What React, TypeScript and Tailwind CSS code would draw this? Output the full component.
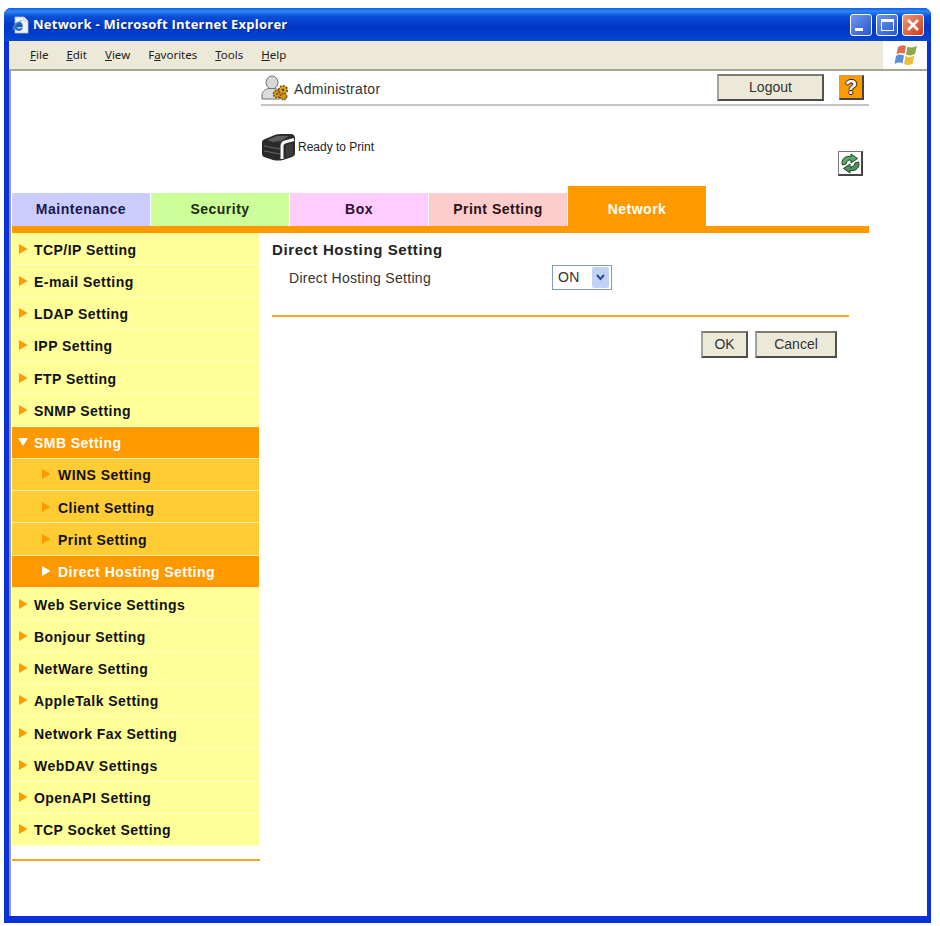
import React from 'react';

const ARIAL = "font-['Liberation_Sans',Arial,sans-serif]";

const NAV_ITEMS = [
  { label: 'TCP/IP Setting' },
  { label: 'E-mail Setting' },
  { label: 'LDAP Setting' },
  { label: 'IPP Setting' },
  { label: 'FTP Setting' },
  { label: 'SNMP Setting' },
  { label: 'SMB Setting', open: true },
  { label: 'WINS Setting', sub: true },
  { label: 'Client Setting', sub: true },
  { label: 'Print Setting', sub: true },
  { label: 'Direct Hosting Setting', sub: true, active: true },
  { label: 'Web Service Settings' },
  { label: 'Bonjour Setting' },
  { label: 'NetWare Setting' },
  { label: 'AppleTalk Setting' },
  { label: 'Network Fax Setting' },
  { label: 'WebDAV Settings' },
  { label: 'OpenAPI Setting' },
  { label: 'TCP Socket Setting' },
];

const TABS = [
  { label: 'Maintenance', cls: 'bg-[#ccccff] text-[#1a1a4a]' },
  { label: 'Security', cls: 'bg-[#ccff99] text-[#1c2a10]' },
  { label: 'Box', cls: 'bg-[#ffccff] text-[#2a1030]' },
  { label: 'Print Setting', cls: 'bg-[#ffcccc] text-[#2a1414]' },
];

const MENU = [
  { key: 'F', rest: 'ile', before: '' },
  { key: 'E', rest: 'dit', before: '' },
  { key: 'V', rest: 'iew', before: '' },
  { key: 'a', rest: 'vorites', before: 'F' },
  { key: 'T', rest: 'ools', before: '' },
  { key: 'H', rest: 'elp', before: '' },
];

const Arrow: React.FC<{ color: string; down?: boolean }> = ({ color, down }) => (
  <svg width="10" height="10" viewBox="0 0 10 10" className="shrink-0">
    <path d={down ? 'M0 1H10L5 9Z' : 'M1 0L9.5 5L1 10Z'} fill={color} />
  </svg>
);

const WinButton: React.FC<{ children: React.ReactNode; cls: string }> = ({ children, cls }) => (
  <div className={`size-[22px] rounded-[3px] border border-white flex items-center justify-center ${cls}`}>
    {children}
  </div>
);

const IeIcon = () => (
  <svg width="18" height="18" viewBox="0 0 18 18" className="shrink-0">
    <path d="M4 1H13L17 5V17H4Z" fill="#f2f2f2" stroke="#b8c0cc" strokeWidth="0.8" />
    <path d="M13 1V5H17" fill="#ffffff" stroke="#b8c0cc" strokeWidth="0.8" />
    <path
      d="M1 10.5H11C11 8 9.5 6.8 7.8 6.8C6 6.8 4.6 8 4.2 9.5H6C6.3 8.8 7 8.4 7.8 8.4C8.6 8.4 9.2 9 9.2 9.6H3.5"
      fill="#2a78d8"
      stroke="#1c5fb8"
      strokeWidth="1.4"
    />
    <path d="M3.5 10.5C3.5 13 5.5 14.5 7.8 14.5C9.5 14.5 10.7 13.7 11.3 12.4H9.3C8.9 12.9 8.4 13 7.8 13C6.6 13 5.8 12 5.7 10.5Z" fill="#2a78d8" stroke="#1c5fb8" strokeWidth="0.8" />
    <path d="M2 14C3 9 7 5.5 11 4.5" fill="none" stroke="#5aa0e8" strokeWidth="1" />
  </svg>
);

const XpFlag = () => (
  <svg width="24" height="22" viewBox="0 0 24 22">
    <path d="M4 3Q8 0 12 2L10.5 10Q7 8 2.5 10.5Z" fill="#d9714f" />
    <path d="M13.5 2.5Q18 5 23 1.5L21 10Q16.5 12.5 12 10.5Z" fill="#8fa84a" />
    <path d="M2 12Q6 9.5 10 11.5L8.5 19.5Q5 17.5 0.5 20Z" fill="#5b8ed8" />
    <path d="M11.5 12Q16 14 20.5 11.5L18.5 20Q14 22 10 20Z" fill="#eebc3e" />
  </svg>
);

const AdminIcon = () => (
  <svg width="28" height="26" viewBox="0 0 28 26" className="shrink-0">
    <ellipse cx="11" cy="7.5" rx="6" ry="6.5" fill="#d8d8d8" stroke="#707070" />
    <path d="M1 24V20C1 16 5 14 8 13.5H14C17 14 19 16 19 24Z" fill="#dcdcdc" stroke="#707070" />
    <circle cx="16" cy="19" r="3.6" fill="#dd9a18" stroke="#7a5208" strokeWidth="1.6" strokeDasharray="1.8 1" />
    <circle cx="22" cy="15" r="4.2" fill="#e5a520" stroke="#7a5208" strokeWidth="1.8" strokeDasharray="2 1.2" />
    <circle cx="22.5" cy="21.5" r="3.2" fill="#d9951a" stroke="#7a5208" strokeWidth="1.5" strokeDasharray="1.6 1" />
    <circle cx="22" cy="15" r="1.4" fill="#6a4808" />
    <circle cx="16" cy="19" r="1.1" fill="#6a4808" />
  </svg>
);

const PrinterIcon = () => (
  <svg width="35" height="28" viewBox="0 0 35 28" className="shrink-0">
    <path d="M1 9Q1 7 4 6L15 1.5Q17 1 20 1H31Q34 2 34 5V21Q34 23 31 24L22 27Q17 28 12 27L3 24Q1 23 1 21Z" fill="#2a2a2a" />
    <path d="M6 7L16 3H28L20 8L12 9Z" fill="#5e5e5e" />
    <path d="M3 13L19 16M3 18L19 21" stroke="#666" strokeWidth="1.2" />
    <path d="M21 26V13Q21 10 24 9L33 6.5" fill="none" stroke="#f6f6f6" strokeWidth="3" />
    <path d="M25 12L32 10V22L25 24Z" fill="#3c3c3c" />
  </svg>
);

const RefreshIcon = () => (
  <svg width="21" height="21" viewBox="0 0 21 21">
    <path d="M2 10C2 5.5 6 2.5 11 3.5V1L17.5 5.5L11 10V7C8.5 6.5 6.5 8 6 11L2.5 12Z" fill="#5aa868" stroke="#1f3f28" strokeWidth="1" />
    <path d="M19 11C19 15.5 15 18.5 10 17.5V20L3.5 15.5L10 11V14C12.5 14.5 14.5 13 15 10L18.5 9Z" fill="#4a9458" stroke="#1f3f28" strokeWidth="1" />
  </svg>
);

const XpButton: React.FC<{ children: React.ReactNode; cls: string }> = ({ children, cls }) => (
  <button
    className={`bg-[#ece9d8] border-2 border-t-[#7d7b6f] border-l-[#a5a395] border-r-[#55544c] border-b-[#4d4c45] text-[14px] text-[#333] flex items-center justify-center ${cls}`}
  >
    {children}
  </button>
);

export default function App() {
  return (
    <div className={`w-[940px] h-[926px] bg-white pt-2 pl-1 overflow-hidden ${ARIAL}`}>
      <div className="w-[927px] h-[915px] rounded-t-[7px] bg-[#0831d9] flex flex-col">
        {/* Title bar */}
        <div className="h-[33px] shrink-0 rounded-t-[7px] bg-[linear-gradient(180deg,#0f5ee8_0%,#2f86f5_10%,#0a4fd8_25%,#0037c4_55%,#0040d0_85%,#0a4ac8_100%)] flex items-center pl-[7px] pr-[7px]">
          <IeIcon />
          <span className="ml-[4px] text-white font-bold text-[13px] tracking-[0.25px] font-['Open_Sans',sans-serif] [text-shadow:1px_1px_0_#0a2a8a]">
            Network - Microsoft Internet Explorer
          </span>
          <div className="ml-auto flex gap-[4px]">
            <WinButton cls="bg-[linear-gradient(135deg,#6f97ef,#2a56d0)]">
              <div className="w-[8px] h-[3px] bg-white mt-[10px] mr-[5px]" />
            </WinButton>
            <WinButton cls="bg-[linear-gradient(135deg,#6f97ef,#2a56d0)]">
              <div className="w-[13px] h-[12px] border border-white border-t-[3px]" />
            </WinButton>
            <WinButton cls="bg-[linear-gradient(135deg,#f0987a,#cf3a12)]">
              <svg width="14" height="14" viewBox="0 0 14 14">
                <path d="M2 2L12 12M12 2L2 12" stroke="#fff" strokeWidth="2.6" />
              </svg>
            </WinButton>
          </div>
        </div>

        <div className="ml-[5px] mr-1 h-[875px] bg-white flex flex-col">
          {/* Menu bar */}
          <div className="h-[30px] shrink-0 flex border-b-2 border-[#a8a595]">
            <div className="w-[874px] bg-[#ece9d8] flex items-center pl-[21px] gap-[18px] text-[11.5px] text-[#222] font-['Noto_Sans',sans-serif]">
              {MENU.map((m) => (
                <span key={m.key} className="mb-px">
                  {m.before}
                  <span className="underline">{m.key}</span>
                  {m.rest}
                </span>
              ))}
            </div>
            <div className="flex-1 flex items-center justify-center pl-[2px]">
              <XpFlag />
            </div>
          </div>

          <div className="flex-1 border-l-2 border-[#9a9a9a] pl-px flex flex-col">
            {/* Header */}
            <div className="h-[115px] shrink-0 pl-[249px]">
              <div className="w-[608px] h-[35px] border-b-2 border-[#c4c4c4] flex items-center">
                <AdminIcon />
                <span className="ml-[5px] mt-[3px] text-[14px] text-[#333] tracking-[0.3px]">Administrator</span>
                <XpButton cls="ml-auto w-[107px] h-[27px]">Logout</XpButton>
                <div className="ml-[15px] mr-[5px] size-[25px] bg-[#ff9900] border border-[#c9a060] border-b-2 border-r-2 border-r-[#444] border-b-[#444] flex items-center justify-center text-white font-bold text-[20px] [text-shadow:1px_0_0_#222,-1px_0_0_#222,0_1px_0_#222,0_-1px_0_#222]">
                  ?
                </div>
              </div>
              <div className="w-[608px] flex justify-between items-start">
                <div className="mt-[27px] flex items-center">
                  <PrinterIcon />
                  <span className="ml-[2px] text-[12px] text-[#222]">Ready to Print</span>
                </div>
                <div className="mt-[45px] mr-[6px] size-[25px] border border-[#777] border-r-2 border-b-2 border-r-[#444] border-b-[#444] bg-white flex items-center justify-center">
                  <RefreshIcon />
                </div>
              </div>
            </div>

            {/* Tabs */}
            <div className="h-[40px] shrink-0 flex items-end gap-px text-[14px] font-bold tracking-[0.5px]">
              {TABS.map((tab) => (
                <div key={tab.label} className={`w-[138px] h-[33px] flex items-center justify-center ${tab.cls}`}>
                  {tab.label}
                </div>
              ))}
              <div className="w-[138px] h-[40px] pt-[6px] bg-[#ff9900] text-white flex items-center justify-center">
                Network
              </div>
            </div>
            <div className="h-[7px] w-[857px] shrink-0 bg-[#ff9900]" />

            <div className="flex flex-1">
              {/* Side menu */}
              <div className="w-[247px] shrink-0 flex flex-col">
                <div className="h-[613px] flex flex-col">
                  {NAV_ITEMS.map((item) => {
                    const bg = item.open || item.active ? 'bg-[#ff9900] text-white' : item.sub ? 'bg-[#ffcc33] text-[#111]' : 'bg-[#ffff99] text-[#111]';
                    const line = item.open || item.sub ? 'border-[#ffeeaa]' : 'border-[#ffffcc]';
                    return (
                      <div
                        key={item.label}
                        className={`flex-1 flex items-center border-b pt-[3px] ${line} ${bg} ${item.sub ? 'pl-[29px]' : 'pl-[6px]'} text-[14px] font-bold tracking-[0.45px]`}
                      >
                        <div className="mb-[3px]">
                          <Arrow color={item.open || item.active ? '#ffffff' : '#ff9900'} down={item.open} />
                        </div>
                        <span className={`${item.sub ? 'ml-[7px]' : 'ml-[6px]'}`}>{item.label}</span>
                      </div>
                    );
                  })}
                </div>
                <div className="mt-[13px] h-[2px] w-[248px] bg-[#f5a623]" />
              </div>

              {/* Content */}
              <div className="ml-[13px] w-[577px] flex flex-col">
                <h1 className="mt-[9px] text-[15px] leading-[16px] font-bold text-[#222] tracking-[0.6px]">Direct Hosting Setting</h1>
                <div className="mt-[7px] h-[25px] flex items-center text-[14px] text-[#333] tracking-[0.3px]">
                  <span className="ml-[17px] mt-px">Direct Hosting Setting</span>
                  <div className="ml-[121px] w-[60px] h-[25px] border border-[#7f9db9] bg-white flex items-center pl-[5px] pr-[2px]">
                    <span>ON</span>
                    <div className="ml-auto w-[17px] h-[21px] bg-[#c1d2f5] rounded-[2px] flex items-center justify-center">
                      <svg width="9" height="7" viewBox="0 0 9 7">
                        <path d="M1 1L4.5 5L8 1" fill="none" stroke="#2b4a8c" strokeWidth="2" />
                      </svg>
                    </div>
                  </div>
                </div>
                <div className="mt-[25px] h-[2px] bg-[#f5a623]" />
                <div className="mt-[14px] flex justify-end gap-[7px] pr-[12px]">
                  <XpButton cls="w-[47px] h-[27px]">OK</XpButton>
                  <XpButton cls="w-[82px] h-[27px]">Cancel</XpButton>
                </div>
              </div>
            </div>
          </div>
        </div>
      </div>
    </div>
  );
}
